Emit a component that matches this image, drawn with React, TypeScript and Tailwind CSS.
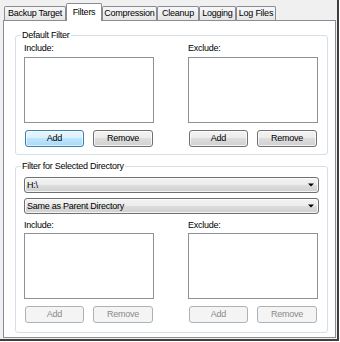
import React from "react";

type Variant = "normal" | "focus" | "disabled";

const btnStyles: Record<Variant, string> = {
  normal:
    "border-[#707070] bg-[linear-gradient(#f3f3f3,#ebebeb_50%,#dddddd_50%,#d0d0d0)] text-black shadow-[inset_0_0_0_1px_rgba(255,255,255,0.75)]",
  focus:
    "border-[#3c7fb1] bg-[linear-gradient(#eaf6fd,#d9f0fc_50%,#bee6fd_50%,#a7d9f5)] text-black shadow-[inset_0_0_0_1px_rgba(255,255,255,0.6)]",
  disabled: "border-[#adb2b5] bg-[#f4f4f4] text-[#8a8a8a]",
};

function Btn({ label, variant, className }: { label: string; variant: Variant; className: string }) {
  return (
    <div
      className={`h-[17px] rounded-[3px] border flex items-center justify-center leading-none ${btnStyles[variant]} ${className}`}
    >
      {label}
    </div>
  );
}

function Column({
  label,
  disabled,
  focusAdd,
  listGap,
}: {
  label: string;
  disabled?: boolean;
  focusAdd?: boolean;
  listGap: string;
}) {
  const v: Variant = disabled ? "disabled" : "normal";
  return (
    <div className="w-[130px] flex flex-col">
      <div className="h-[12px] leading-[12px]">{label}</div>
      <div className={`${listGap} h-[66px] border border-[#8e9196] bg-white`} />
      <div className="mt-[7px] flex pl-[1px]">
        <Btn label="Add" variant={focusAdd ? "focus" : v} className="w-[59px]" />
        <Btn label="Remove" variant={v} className="ml-[9px] w-[60px]" />
      </div>
    </div>
  );
}

function Dropdown({ text, className }: { text: string; className?: string }) {
  return (
    <div
      className={`h-[16px] w-[295px] rounded-[3px] border border-[#707070] bg-[linear-gradient(#f3f3f3,#ebebeb_50%,#dddddd_50%,#d0d0d0)] shadow-[inset_0_0_0_1px_rgba(255,255,255,0.75)] flex items-center justify-between pl-[2px] pr-[4px] leading-none ${className ?? ""}`}
    >
      <span>{text}</span>
      <svg width="6" height="4" viewBox="0 0 6 4">
        <path d="M0 0.5h6L3 3.5z" fill="#000" />
      </svg>
    </div>
  );
}

function Tab({ label, w, selected }: { label: string; w: string; selected?: boolean }) {
  if (selected) {
    return (
      <div
        className={`${w} h-[18px] -mb-[1px] relative z-10 bg-white border-t border-l border-r border-[#898c95] rounded-t-[2px] flex items-center justify-center leading-none`}
      >
        {label}
      </div>
    );
  }
  return (
    <div
      className={`${w} h-[14px] border-t border-l border-r border-[#898c95] rounded-t-[2px] bg-[linear-gradient(#f8f8f8,#e5e5e5)] flex items-center justify-center leading-none`}
    >
      {label}
    </div>
  );
}

export default function App() {
  return (
    <div className="w-[340px] h-[342px] bg-white font-['Liberation_Sans',Arial,sans-serif] text-[9px] tracking-[-0.25px] text-black">
      <div className="w-[339px] h-[341px] border-r-2 border-b-2 border-[#3f3f3f] bg-[#f0f0f0] pl-[3px]">
        <div className="h-[20px] flex items-end pl-[1px]">
          <Tab label="Backup Target" w="w-[62px]" />
          <Tab label="Filters" w="w-[36px]" selected />
          <Tab label="Compression" w="w-[55px]" />
          <Tab label="Cleanup" w="w-[42px]" />
          <Tab label="Logging" w="w-[37px]" />
          <Tab label="Log Files" w="w-[40px]" />
        </div>
        <div className="w-[333px] h-[318px] border border-[#898c95] bg-white pl-[11px] pt-[14px]">
          <div className="relative w-[313px] border border-[#d5dfe5] rounded-[3px] pt-[6px] pl-[8px] pr-[9px] pb-[7px]">
            <span className="absolute left-[5px] top-[-7px] bg-white px-[1px] leading-[12px]">
              Default Filter
            </span>
            <div className="flex gap-[34px]">
              <Column label="Include:" focusAdd listGap="mt-[3px]" />
              <Column label="Exclude:" listGap="mt-[3px]" />
            </div>
          </div>
          <div className="relative mt-[11px] w-[313px] border border-[#d5dfe5] rounded-[3px] pt-[10px] pl-[8px] pr-[9px] pb-[9px]">
            <span className="absolute left-[5px] top-[-7px] bg-white px-[1px] leading-[12px]">
              Filter for Selected Directory
            </span>
            <Dropdown text={"H:\\"} />
            <Dropdown text="Same as Parent Directory" className="mt-[5px]" />
            <div className="mt-[5px] flex gap-[34px]">
              <Column label="Include:" disabled listGap="mt-[2px]" />
              <Column label="Exclude:" disabled listGap="mt-[2px]" />
            </div>
          </div>
        </div>
      </div>
    </div>
  );
}
